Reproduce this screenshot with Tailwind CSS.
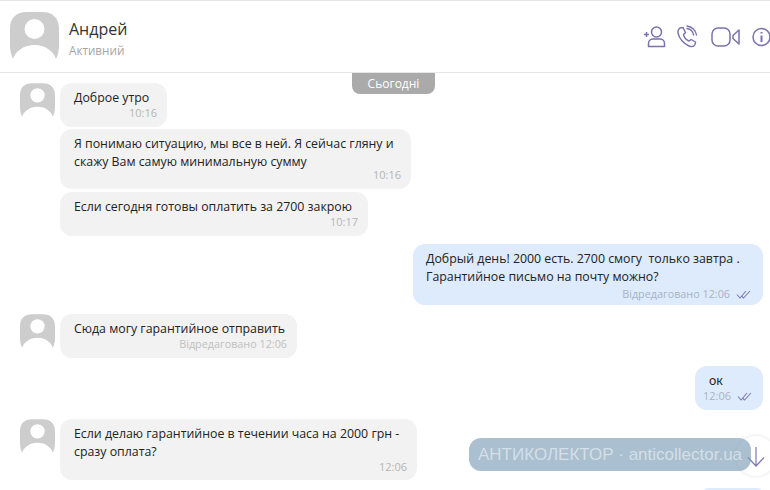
<!DOCTYPE html>
<html>
<head>
<meta charset="utf-8">
<script src="https://cdn.jsdelivr.net/npm/@tailwindcss/browser@4"></script>
</head>
<body class="bg-white">
<div class="relative w-[770px] h-[490px] overflow-hidden bg-white font-['Open_Sans','Noto_Sans',sans-serif] text-[#222]">
  <header class="h-[73px] border-t border-b border-[#e6e6e6] flex items-start">
    <svg class="ml-[10px] mt-[11px] w-[49px] h-[47px]" viewBox="0 0 49 47"><path d="M17 0H32C43 0 49 6 49 17V33C49 38 48 43 46 47C44 40 36 33 24.500 33C13 33 5 40 3 47C1 43 0 38 0 33V17C0 6 6 0 17 0Z" fill="#cdcdcd"/><circle cx="24.500" cy="17" r="10" fill="#fff"/></svg>
    <div class="ml-[10px] mt-[17px]">
      <div class="text-[16px] leading-[22px] text-[#333]">Андрей</div>
      <div class="text-[11.700px] leading-[16px] mt-[2px] text-[#a5a5a5]">Активний</div>
    </div>
    <div class="ml-auto mt-[24px] flex items-center text-[#7a72ae]">
      <svg class="w-[24px] h-[24px]" viewBox="0 0 24 24" fill="none" stroke="currentColor" stroke-width="1.500"><path d="M1 9.500H6M3.500 7V12"/><circle cx="13.500" cy="7" r="5"/><path d="M5.500 21.500V18.500C5.500 15.500 8 14 10 14H17C19 14 21.500 15.500 21.500 18.500V21.500Z" stroke-linejoin="round"/></svg>
      <svg class="ml-[9px] w-[22px] h-[24px]" viewBox="0 0 22 24" fill="none" stroke="currentColor" stroke-width="1.400" stroke-linecap="round"><path d="M4 3L7 2.500L9.500 7.500L7.500 9.500C8 12 10.500 15 13 16L15 14.500L19.500 17L19 19.500C18 21.500 15.500 22 13 21C8 19 3 13.500 2 8C1.700 6 2.500 4 4 3Z"/><path d="M11 3.500C14.500 4 17 6.500 17.500 10M11 1C16 1.500 20 5.500 20.500 10"/></svg>
      <svg class="ml-[13px] w-[30px] h-[24px]" viewBox="0 0 30 24" fill="none" stroke="currentColor" stroke-width="1.500" stroke-linejoin="round"><rect x="1" y="3" width="18" height="18" rx="6"/><path d="M28 5L22 10.500V13.500L28 19Z"/></svg>
      <svg class="ml-[10px] mr-[-1px] w-[20px] h-[24px]" viewBox="0 0 20 24" fill="none" stroke="currentColor" stroke-width="1.500"><circle cx="10.500" cy="12" r="8.500"/><path d="M10.500 10.500V17M10.500 7V8.500" stroke-width="2"/></svg>
    </div>
  </header>

  <div class="absolute left-[352px] top-[73px] w-[83px] h-[21px] bg-[#aaaaaa] rounded-b-[8px] text-white text-[12px] leading-[21px] text-center">Сьогодні</div>

  <main class="pt-[10px] flex flex-col text-[12.350px] leading-[18px]">
    <div class="flex items-start pl-[20px]">
      <svg class="w-[35px] h-[34px] mr-[5px] shrink-0" viewBox="0 0 49 47"><path d="M17 0H32C43 0 49 6 49 17V33C49 38 48 43 46 47C44 40 36 33 24.500 33C13 33 5 40 3 47C1 43 0 38 0 33V17C0 6 6 0 17 0Z" fill="#cdcdcd"/><circle cx="24.500" cy="17" r="10" fill="#fff"/></svg>
      <div class="w-[107px] h-[44px] bg-[#f2f2f2] rounded-[12px] pl-[14px] pr-[10px] pt-[6px]">
        <div>Доброе утро</div>
        <div class="text-right text-[11px] leading-[14px] text-[#b5b5b5] mt-[-1px]">10:16</div>
      </div>
    </div>

    <div class="ml-[60px] mt-[2px] w-[351px] h-[60px] bg-[#f2f2f2] rounded-[12px] pl-[14px] pr-[10px] pt-[6px]">
      <div>Я понимаю ситуацию, мы все в ней. Я сейчас гляну и<br>скажу Вам самую минимальную сумму</div>
      <div class="text-right text-[11px] leading-[14px] text-[#b5b5b5] mt-[-3px]">10:16</div>
    </div>

    <div class="ml-[60px] mt-[3px] w-[308px] h-[44px] bg-[#f2f2f2] rounded-[12px] pl-[14px] pr-[10px] pt-[6px]">
      <div>Если сегодня готовы оплатить за 2700 закрою</div>
      <div class="text-right text-[11px] leading-[14px] text-[#b5b5b5] mt-[-1px]">10:17</div>
    </div>

    <div class="ml-[413px] mt-[8px] w-[350px] h-[61px] bg-[#ddebfc] rounded-[12px] pl-[13px] pr-[12px] pt-[6px]">
      <div class="whitespace-pre">Добрый день! 2000 есть. 2700 смогу  только завтра .<br>Гарантийное письмо на почту можно?</div>
      <div class="flex justify-end items-center text-[10.800px] leading-[14px] text-[#a9b3c4] mt-[1px]">Відредаговано 12:06
        <svg class="ml-[6px] w-[15px] h-[9px]" viewBox="0 0 15 9" fill="none" stroke="#7f7bb0" stroke-width="1.100"><path d="M1 4.500L4 8L10 1M6 6.500L7.500 8L14 1"/></svg>
      </div>
    </div>

    <div class="flex items-start pl-[20px] mt-[9px]">
      <svg class="w-[35px] h-[34px] mr-[5px] shrink-0" viewBox="0 0 49 47"><path d="M17 0H32C43 0 49 6 49 17V33C49 38 48 43 46 47C44 40 36 33 24.500 33C13 33 5 40 3 47C1 43 0 38 0 33V17C0 6 6 0 17 0Z" fill="#cdcdcd"/><circle cx="24.500" cy="17" r="10" fill="#fff"/></svg>
      <div class="w-[237px] h-[44px] bg-[#f2f2f2] rounded-[12px] pl-[14px] pr-[10px] pt-[6px]">
        <div class="whitespace-nowrap">Сюда могу гарантийное отправить</div>
        <div class="text-right text-[10.800px] leading-[14px] text-[#c0c0c0] mt-[-1px]">Відредаговано 12:06</div>
      </div>
    </div>

    <div class="ml-[695px] mt-[8px] w-[68px] h-[44px] bg-[#ddebfc] rounded-[12px] pl-[14px] pr-[11px] pt-[6px]">
      <div class="font-['Noto_Sans',sans-serif]">ок</div>
      <div class="flex justify-end items-center text-[11px] leading-[14px] text-[#a9b3c4] mt-[-1px] ml-[-8px] whitespace-nowrap">12:06
        <svg class="ml-[6px] w-[15px] h-[9px] shrink-0" viewBox="0 0 15 9" fill="none" stroke="#7f7bb0" stroke-width="1.100"><path d="M1 4.500L4 8L10 1M6 6.500L7.500 8L14 1"/></svg>
      </div>
    </div>

    <div class="flex items-start pl-[20px] mt-[9px]">
      <svg class="w-[35px] h-[34px] mr-[5px] shrink-0" viewBox="0 0 49 47"><path d="M17 0H32C43 0 49 6 49 17V33C49 38 48 43 46 47C44 40 36 33 24.500 33C13 33 5 40 3 47C1 43 0 38 0 33V17C0 6 6 0 17 0Z" fill="#cdcdcd"/><circle cx="24.500" cy="17" r="10" fill="#fff"/></svg>
      <div class="w-[357px] h-[61px] bg-[#f2f2f2] rounded-[12px] pl-[14px] pr-[10px] pt-[6px]">
        <div>Если делаю гарантийное в течении часа на 2000 грн -<br>сразу оплата?</div>
        <div class="text-right text-[11px] leading-[14px] text-[#b5b5b5] mt-[-1px]">12:06</div>
      </div>
    </div>

    <div class="ml-[702px] mt-[8px] w-[61px] h-[10px] bg-[#ddebfc] rounded-t-[6px]"></div>
  </main>

  <div class="absolute left-[736px] top-[436px] w-[40px] h-[40px] rounded-full bg-white shadow-[0_0_4px_rgba(0,0,0,0.12)] flex items-center pl-[10px]">
    <svg class="w-[20px] h-[24px]" viewBox="0 0 20 24" fill="none" stroke="#7f7bb0" stroke-width="1.200"><path d="M10 3V22M2 13.500L10 22L18 13.500"/></svg>
  </div>
  <div class="absolute left-[469px] top-[438px] w-[282px] h-[33px] rounded-[12px] bg-[#7d9db5]/65 text-white/50 font-['Liberation_Sans',sans-serif] text-[17px] leading-[33px] pl-[9px] whitespace-nowrap">АНТИКОЛЕКТОР · anticollector.ua</div>
</div>
</body>
</html>
